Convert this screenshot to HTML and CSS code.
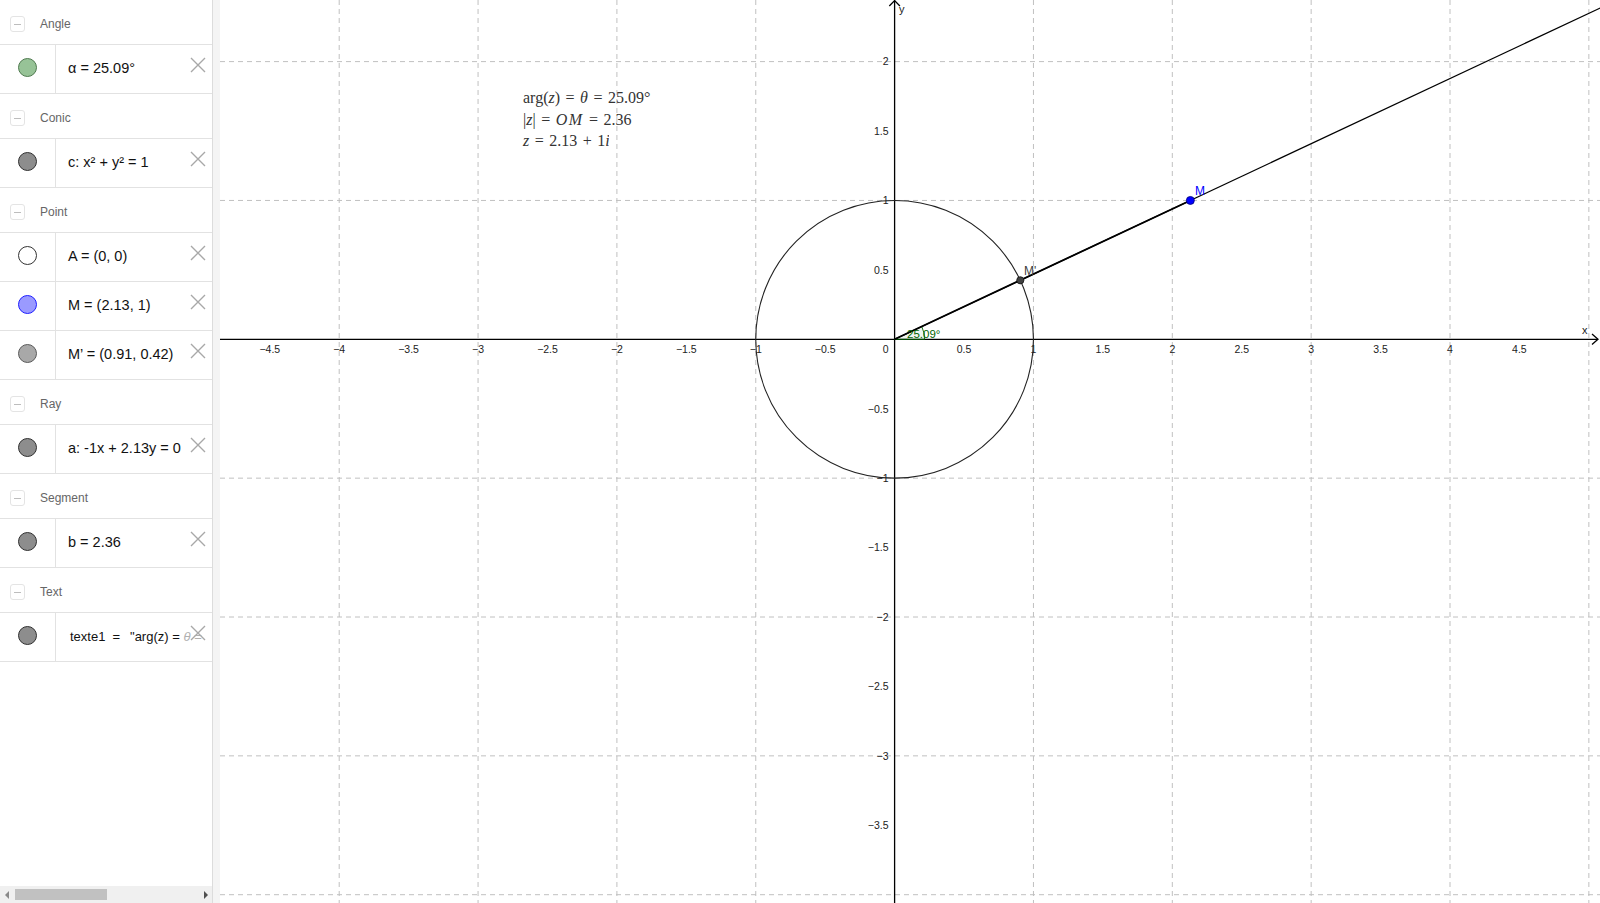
FILE: index.html
```html
<!DOCTYPE html>
<html lang="en">
<head>
<meta charset="utf-8">
<title>GeoGebra</title>
<link rel="stylesheet" href="styles.css">
</head>
<body>
<div class="app">
  <aside class="algebra">
    <div class="list">
      <div class="group"><span class="toggle"></span><span class="glabel">Angle</span></div>
      <div class="item">
        <div class="marble"><span class="dot dot-green"></span></div>
        <div class="content">α = 25.09°</div>
        <svg class="del" viewBox="0 0 16 16"><path d="M1 1L15 15M15 1L1 15"/></svg>
      </div>

      <div class="group"><span class="toggle"></span><span class="glabel">Conic</span></div>
      <div class="item">
        <div class="marble"><span class="dot dot-gray"></span></div>
        <div class="content">c: x² + y² = 1</div>
        <svg class="del" viewBox="0 0 16 16"><path d="M1 1L15 15M15 1L1 15"/></svg>
      </div>

      <div class="group"><span class="toggle"></span><span class="glabel">Point</span></div>
      <div class="item">
        <div class="marble"><span class="dot dot-white"></span></div>
        <div class="content">A = (0, 0)</div>
        <svg class="del" viewBox="0 0 16 16"><path d="M1 1L15 15M15 1L1 15"/></svg>
      </div>
      <div class="item">
        <div class="marble"><span class="dot dot-blue"></span></div>
        <div class="content">M = (2.13, 1)</div>
        <svg class="del" viewBox="0 0 16 16"><path d="M1 1L15 15M15 1L1 15"/></svg>
      </div>
      <div class="item">
        <div class="marble"><span class="dot dot-light"></span></div>
        <div class="content">M’ = (0.91, 0.42)</div>
        <svg class="del" viewBox="0 0 16 16"><path d="M1 1L15 15M15 1L1 15"/></svg>
      </div>

      <div class="group"><span class="toggle"></span><span class="glabel">Ray</span></div>
      <div class="item">
        <div class="marble"><span class="dot dot-gray"></span></div>
        <div class="content">a: -1x + 2.13y = 0</div>
        <svg class="del" viewBox="0 0 16 16"><path d="M1 1L15 15M15 1L1 15"/></svg>
      </div>

      <div class="group"><span class="toggle"></span><span class="glabel">Segment</span></div>
      <div class="item">
        <div class="marble"><span class="dot dot-gray"></span></div>
        <div class="content">b = 2.36</div>
        <svg class="del" viewBox="0 0 16 16"><path d="M1 1L15 15M15 1L1 15"/></svg>
      </div>

      <div class="group"><span class="toggle"></span><span class="glabel">Text</span></div>
      <div class="item">
        <div class="marble"><span class="dot dot-gray"></span></div>
        <div class="content content-small"><span>texte1</span><span class="eq">=</span><span>"arg(z) = </span><span class="fade">θ =</span></div>
        <svg class="del" viewBox="0 0 16 16"><path d="M1 1L15 15M15 1L1 15"/></svg>
      </div>
    </div>
    <div class="hscroll">
      <span class="arrow arrow-left"></span>
      <div class="track"><span class="thumb"></span></div>
      <span class="arrow arrow-right"></span>
    </div>
  </aside>
  <div class="splitter"></div>
  <main class="graphics">
    <svg class="plot" width="1380" height="903" viewBox="0 0 1380 903">
      <defs>
        <clipPath id="texclip"><rect x="500" y="80" width="109" height="80"/></clipPath>
      </defs>
      <g transform="translate(-220 0)">
        <!-- grid -->
        <g class="grid">
          <line x1="220" y1="61.6" x2="1600" y2="61.6"/>
          <line x1="220" y1="200.45" x2="1600" y2="200.45"/>
          <line x1="220" y1="478.15" x2="1600" y2="478.15"/>
          <line x1="220" y1="617" x2="1600" y2="617"/>
          <line x1="220" y1="755.85" x2="1600" y2="755.85"/>
          <line x1="220" y1="894.7" x2="1600" y2="894.7"/>
          <line x1="339.2" y1="0" x2="339.2" y2="903"/>
          <line x1="478.05" y1="0" x2="478.05" y2="903"/>
          <line x1="616.9" y1="0" x2="616.9" y2="903"/>
          <line x1="755.75" y1="0" x2="755.75" y2="903"/>
          <line x1="1033.45" y1="0" x2="1033.45" y2="903"/>
          <line x1="1172.3" y1="0" x2="1172.3" y2="903"/>
          <line x1="1311.15" y1="0" x2="1311.15" y2="903"/>
          <line x1="1450" y1="0" x2="1450" y2="903"/>
          <line x1="1588.85" y1="0" x2="1588.85" y2="903"/>
        </g>
        <!-- axes -->
        <g class="axis">
          <line x1="220" y1="339.3" x2="1598" y2="339.3"/>
          <line x1="894.6" y1="0.5" x2="894.6" y2="903"/>
          <polyline points="1592,334 1598,339.3 1592,344.6"/>
          <polyline points="889.3,6 894.6,0.6 899.9,6"/>
        </g>
        <text class="axname" x="1582" y="334">x</text>
        <text class="axname" x="899" y="13">y</text>
        <!-- x labels -->
        <g class="axlab xl">
          <text x="269.8" y="352.5">−4.5</text>
          <text x="339.2" y="352.5">−4</text>
          <text x="408.6" y="352.5">−3.5</text>
          <text x="478.05" y="352.5">−3</text>
          <text x="547.5" y="352.5">−2.5</text>
          <text x="616.9" y="352.5">−2</text>
          <text x="686.3" y="352.5">−1.5</text>
          <text x="755.75" y="352.5">−1</text>
          <text x="825.2" y="352.5">−0.5</text>
          <text x="964" y="352.5">0.5</text>
          <text x="1033.45" y="352.5">1</text>
          <text x="1102.9" y="352.5">1.5</text>
          <text x="1172.3" y="352.5">2</text>
          <text x="1241.7" y="352.5">2.5</text>
          <text x="1311.15" y="352.5">3</text>
          <text x="1380.6" y="352.5">3.5</text>
          <text x="1450" y="352.5">4</text>
          <text x="1519.4" y="352.5">4.5</text>
        </g>
        <!-- y labels -->
        <g class="axlab yl">
          <text x="888.5" y="352.5">0</text>
          <text x="888.5" y="65.4">2</text>
          <text x="888.5" y="134.8">1.5</text>
          <text x="888.5" y="204.2">1</text>
          <text x="888.5" y="273.7">0.5</text>
          <text x="888.5" y="412.5">−0.5</text>
          <text x="888.5" y="481.9">−1</text>
          <text x="888.5" y="551.4">−1.5</text>
          <text x="888.5" y="620.8">−2</text>
          <text x="888.5" y="690.2">−2.5</text>
          <text x="888.5" y="759.6">−3</text>
          <text x="888.5" y="829.1">−3.5</text>
        </g>
        <!-- angle sector -->
        <path class="sector" d="M894.6 339.3 L924.6 339.3 A30 30 0 0 0 921.8 326.6 Z"/>
        <!-- circle -->
        <circle class="conic" cx="894.6" cy="339.3" r="138.85"/>
        <!-- ray and segment -->
        <line class="ray" x1="894.6" y1="339.3" x2="1620" y2="-1.3"/>
        <line class="segment" x1="894.6" y1="339.3" x2="1190.35" y2="200.45"/>
        <!-- points -->
        <circle class="pt-mp" cx="1020.3" cy="280.3" r="3.6"/>
        <circle class="pt-m" cx="1190.35" cy="200.45" r="4"/>
        <text class="lab-m" x="1195" y="195">M</text>
        <text class="lab-mp" x="1024" y="275">M'</text>
        <text class="lab-angle" x="907" y="338">25.09°</text>
        <!-- text object -->
        <g class="tex">
          <text x="523" y="103">arg(<tspan class="it">z</tspan>) = <tspan class="it">θ</tspan> = 25.09°</text>
          <text x="523" y="124.5">|<tspan class="it">z</tspan>| = <tspan class="it wide">OM</tspan> = 2.36</text>
          <text x="523" y="146" clip-path="url(#texclip)"><tspan class="it">z</tspan> = 2.13 + 1<tspan class="it">i</tspan></text>
        </g>
      </g>
    </svg>
  </main>
</div>
</body>
</html>
```

FILE: styles.css
```css
html, body {
  margin: 0;
  padding: 0;
  background: #ffffff;
  overflow: hidden;
}

body {
  font-family: "Liberation Sans", Arial, sans-serif;
  color: #000;
}

.app {
  display: flex;
  width: 1600px;
  height: 903px;
}

/* ---------- algebra view ---------- */
.algebra {
  width: 212px;
  flex: none;
  border-right: 1px solid #dcdcdc;
  display: flex;
  flex-direction: column;
  background: #fff;
}

.list {
  flex: 1;
  overflow: hidden;
}

.group {
  height: 45px;
  border-bottom: 1px solid #e2e2e2;
  display: flex;
  align-items: center;
  padding: 4px 0 0 10px;
  box-sizing: border-box;
}

.toggle {
  width: 13px;
  height: 14px;
  border: 1px solid #e4e4e4;
  border-radius: 3px;
  display: flex;
  align-items: center;
  justify-content: center;
}

.toggle::after {
  content: "";
  width: 7px;
  height: 1px;
  background: #bdbdbd;
}

.glabel {
  margin-left: 15px;
  font-size: 12px;
  color: #666;
}

.item {
  height: 48px;
  border-bottom: 1px solid #e2e2e2;
  display: flex;
  position: relative;
}

.marble {
  width: 56px;
  flex: none;
  border-right: 1px solid #e2e2e2;
  display: flex;
  align-items: center;
  justify-content: center;
  padding-bottom: 3px;
  box-sizing: border-box;
}

.dot {
  width: 17px;
  height: 17px;
  border-radius: 50%;
  border: 1px solid #333;
}

.dot-green { background: #97c397; border-color: #4f7a4f; }
.dot-gray  { background: #8d8d8d; border-color: #303030; }
.dot-white { background: #ffffff; border-color: #333; }
.dot-blue  { background: #9a9aff; border-color: #1e1eff; }
.dot-light { background: #a8a8a8; border-color: #5a5a5a; }

.content {
  flex: 1;
  padding: 0 0 3px 12px;
  display: flex;
  align-items: center;
  font-size: 14.5px;
  white-space: pre;
  overflow: hidden;
  color: #111;
}

.content-small {
  font-size: 13px;
  padding-left: 14px;
  padding-top: 2px;
}

.eq {
  margin: 0 10px 0 7px;
}

.fade {
  color: #b0b0b0;
  font-style: italic;
}

.del {
  position: absolute;
  top: 12px;
  right: 6px;
  width: 16px;
  height: 16px;
  fill: none;
  stroke: #a8a8a8;
  stroke-width: 1.4;
}

/* horizontal scrollbar */
.hscroll {
  height: 17px;
  flex: none;
  display: flex;
  align-items: center;
  background: #f0f0f0;
}

.arrow {
  width: 0;
  height: 0;
  border-top: 4px solid transparent;
  border-bottom: 4px solid transparent;
}

.arrow-left {
  border-right: 4px solid #8a8a8a;
  margin: 0 6px 0 5px;
}

.arrow-right {
  border-left: 4px solid #505050;
  margin: 0 4px 0 4px;
}

.track {
  flex: 1;
  height: 11px;
  display: flex;
}

.thumb {
  width: 92px;
  height: 11px;
  background: #c1c1c1;
}

.splitter {
  width: 7px;
  flex: none;
  background: #f4f4f4;
}

/* ---------- graphics view ---------- */
.graphics {
  flex: 1;
  overflow: hidden;
  background: #fff;
}

.plot {
  display: block;
}

.grid line {
  stroke: #c0c0c0;
  stroke-width: 1;
  stroke-dasharray: 5 4;
}

.axis line,
.axis polyline {
  stroke: #000;
  stroke-width: 1.3;
  fill: none;
}

.axname {
  font-family: "Liberation Sans", Arial, sans-serif;
  font-size: 11px;
  fill: #222;
}

.axlab text {
  font-family: "Liberation Sans", Arial, sans-serif;
  font-size: 10.5px;
  fill: #222;
}

.xl text { text-anchor: middle; }
.yl text { text-anchor: end; }

.sector {
  fill: rgba(0, 100, 0, 0.06);
  stroke: #006400;
  stroke-width: 0.9;
}

.conic {
  fill: none;
  stroke: #222;
  stroke-width: 1.1;
}

.ray {
  stroke: #000;
  stroke-width: 1.2;
}

.segment {
  stroke: #000;
  stroke-width: 1.8;
}

.pt-m {
  fill: #0000ff;
  stroke: #00007a;
  stroke-width: 0.8;
}

.pt-mp {
  fill: #404040;
  stroke: #111;
  stroke-width: 0.8;
}

.lab-m,
.lab-mp,
.lab-angle {
  font-family: "Liberation Sans", Arial, sans-serif;
  font-size: 12px;
}

.lab-m { fill: #0000ff; }
.lab-mp { fill: #404040; }
.lab-angle { fill: #006400; font-size: 11.5px; }

.tex text {
  font-family: "Liberation Serif", "DejaVu Serif", serif;
  font-size: 16px;
  word-spacing: 1.5px;
  fill: #333;
}

.tex .it {
  font-style: italic;
}

.tex .wide {
  letter-spacing: 1.5px;
}
```
